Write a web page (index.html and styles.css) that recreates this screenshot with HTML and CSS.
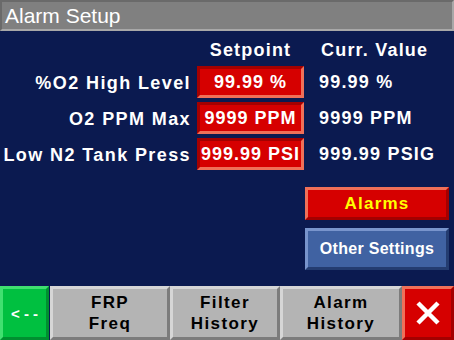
FILE: index.html
```html
<!DOCTYPE html>
<html lang="en">
<head>
    <meta charset="UTF-8">
    <meta name="viewport" content="width=device-width, initial-scale=1.0">
    <title>Alarm Setup</title>
    <link rel="stylesheet" href="styles.css">
</head>
<body>
    <div class="screen">
        <div class="titlebar">Alarm Setup</div>

        <div class="main">
            <div class="grid">
                <div></div>
                <div class="head center">Setpoint</div>
                <div class="head">Curr. Value</div>

                <div class="label">%O2 High Level</div>
                <div class="setbox">99.99 %</div>
                <div class="value">99.99 %</div>

                <div class="label">O2 PPM Max</div>
                <div class="setbox">9999 PPM</div>
                <div class="value">9999 PPM</div>

                <div class="label">Low N2 Tank Press</div>
                <div class="setbox">999.99 PSI</div>
                <div class="value">999.99 PSIG</div>
            </div>

            <div class="actions">
                <div class="btn btn-alarms">Alarms</div>
                <div class="btn btn-other">Other Settings</div>
            </div>
        </div>

        <div class="footer">
            <div class="fbtn fbtn-back">&lt; - -</div>
            <div class="fbtn fbtn-frp">FRP<br>Freq</div>
            <div class="fbtn fbtn-filter">Filter<br>History</div>
            <div class="fbtn fbtn-alarm">Alarm<br>History</div>
            <div class="fbtn fbtn-close">
                <svg width="26" height="26" viewBox="0 0 26 26">
                    <path d="M3 3 L23 23 M23 3 L3 23" stroke="#fff" stroke-width="4.5" fill="none"/>
                </svg>
            </div>
        </div>
    </div>
</body>
</html>
```

FILE: styles.css
```css
body {
    margin: 0;
    font-family: "Liberation Sans", Arial, sans-serif;
    background: #0b1a50;
}
.screen {
    width: 454px;
    height: 340px;
    display: flex;
    flex-direction: column;
    background: #0b1a50;
    color: #fff;
}
.titlebar {
    height: 27px;
    background: #808080;
    border-top: 2px solid #6a6a6a;
    border-left: 2px solid #6a6a6a;
    border-right: 2px solid #a8a8a8;
    border-bottom: 2px solid #a8a8a8;
    font-size: 21px;
    line-height: 27px;
    padding-left: 3px;
    color: #fff;
}
.main {
    height: 255px;
    display: flex;
    flex-direction: column;
}
.grid {
    display: grid;
    grid-template-columns: 191px 113px 1fr;
    grid-template-rows: 23px 32px 32px 32px;
    row-gap: 4px;
    margin-top: 8px;
    font-weight: bold;
    font-size: 18px;
    letter-spacing: 1.2px;
}
.grid > div {
    display: flex;
    align-items: center;
}
.grid > .head {
    padding-left: 17px;
}
.grid > .head.center {
    padding-left: 0;
    justify-content: center;
    margin-left: 6px;
}
.grid > .label {
    justify-content: flex-end;
    white-space: nowrap;
    letter-spacing: 1.4px;
    padding-top: 3px;
}
.setbox {
    justify-content: center;
    margin-left: 6px;
    background: #d60000;
    border-top: 3px solid #a40000;
    border-left: 3px solid #a40000;
    border-right: 3px solid #f07058;
    border-bottom: 3px solid #f07058;
    white-space: nowrap;
    letter-spacing: 1px;
}
.grid > .value {
    padding-left: 15px;
    white-space: nowrap;
}
.actions {
    display: flex;
    flex-direction: column;
    align-items: flex-end;
    gap: 8px;
    margin-top: 17px;
    padding-right: 5px;
}
.btn {
    width: 138px;
    display: flex;
    align-items: center;
    justify-content: center;
    font-weight: bold;
}
.btn-alarms {
    height: 27px;
    background: #d60000;
    border-top: 3px solid #f07058;
    border-left: 3px solid #f07058;
    border-right: 3px solid #a40000;
    border-bottom: 3px solid #a40000;
    color: #ffff00;
    font-size: 17px;
    letter-spacing: 1.2px;
}
.btn-other {
    height: 36px;
    background: #4062a2;
    border-top: 3px solid #7894cc;
    border-left: 3px solid #7894cc;
    border-right: 3px solid #243c70;
    border-bottom: 3px solid #243c70;
    color: #fff;
    font-size: 16px;
    letter-spacing: 0.3px;
}
.footer {
    height: 54px;
    display: flex;
}
.fbtn {
    box-sizing: border-box;
    height: 54px;
    display: flex;
    align-items: center;
    justify-content: center;
    text-align: center;
    font-weight: bold;
    font-size: 17px;
    line-height: 21px;
    letter-spacing: 1.4px;
    color: #000;
    background: #b4b4b4;
    border-top: 3px solid #d6d6d6;
    border-left: 3px solid #d6d6d6;
    border-right: 3px solid #7c7c7c;
    border-bottom: 3px solid #7c7c7c;
}
.fbtn-back {
    width: 49px;
    background: #00c040;
    border-top-color: #40e070;
    border-left-color: #40e070;
    border-right-color: #009030;
    border-bottom-color: #009030;
    color: #fff;
    font-size: 15px;
    letter-spacing: 0;
    margin-right: 1px;
}
.fbtn-frp {
    width: 120px;
}
.fbtn-filter {
    width: 110px;
}
.fbtn-alarm {
    width: 122px;
}
.fbtn-close {
    width: 52px;
    background: #d60000;
    border-top-color: #f07058;
    border-left-color: #f07058;
    border-right-color: #a40000;
    border-bottom-color: #a40000;
}
```
